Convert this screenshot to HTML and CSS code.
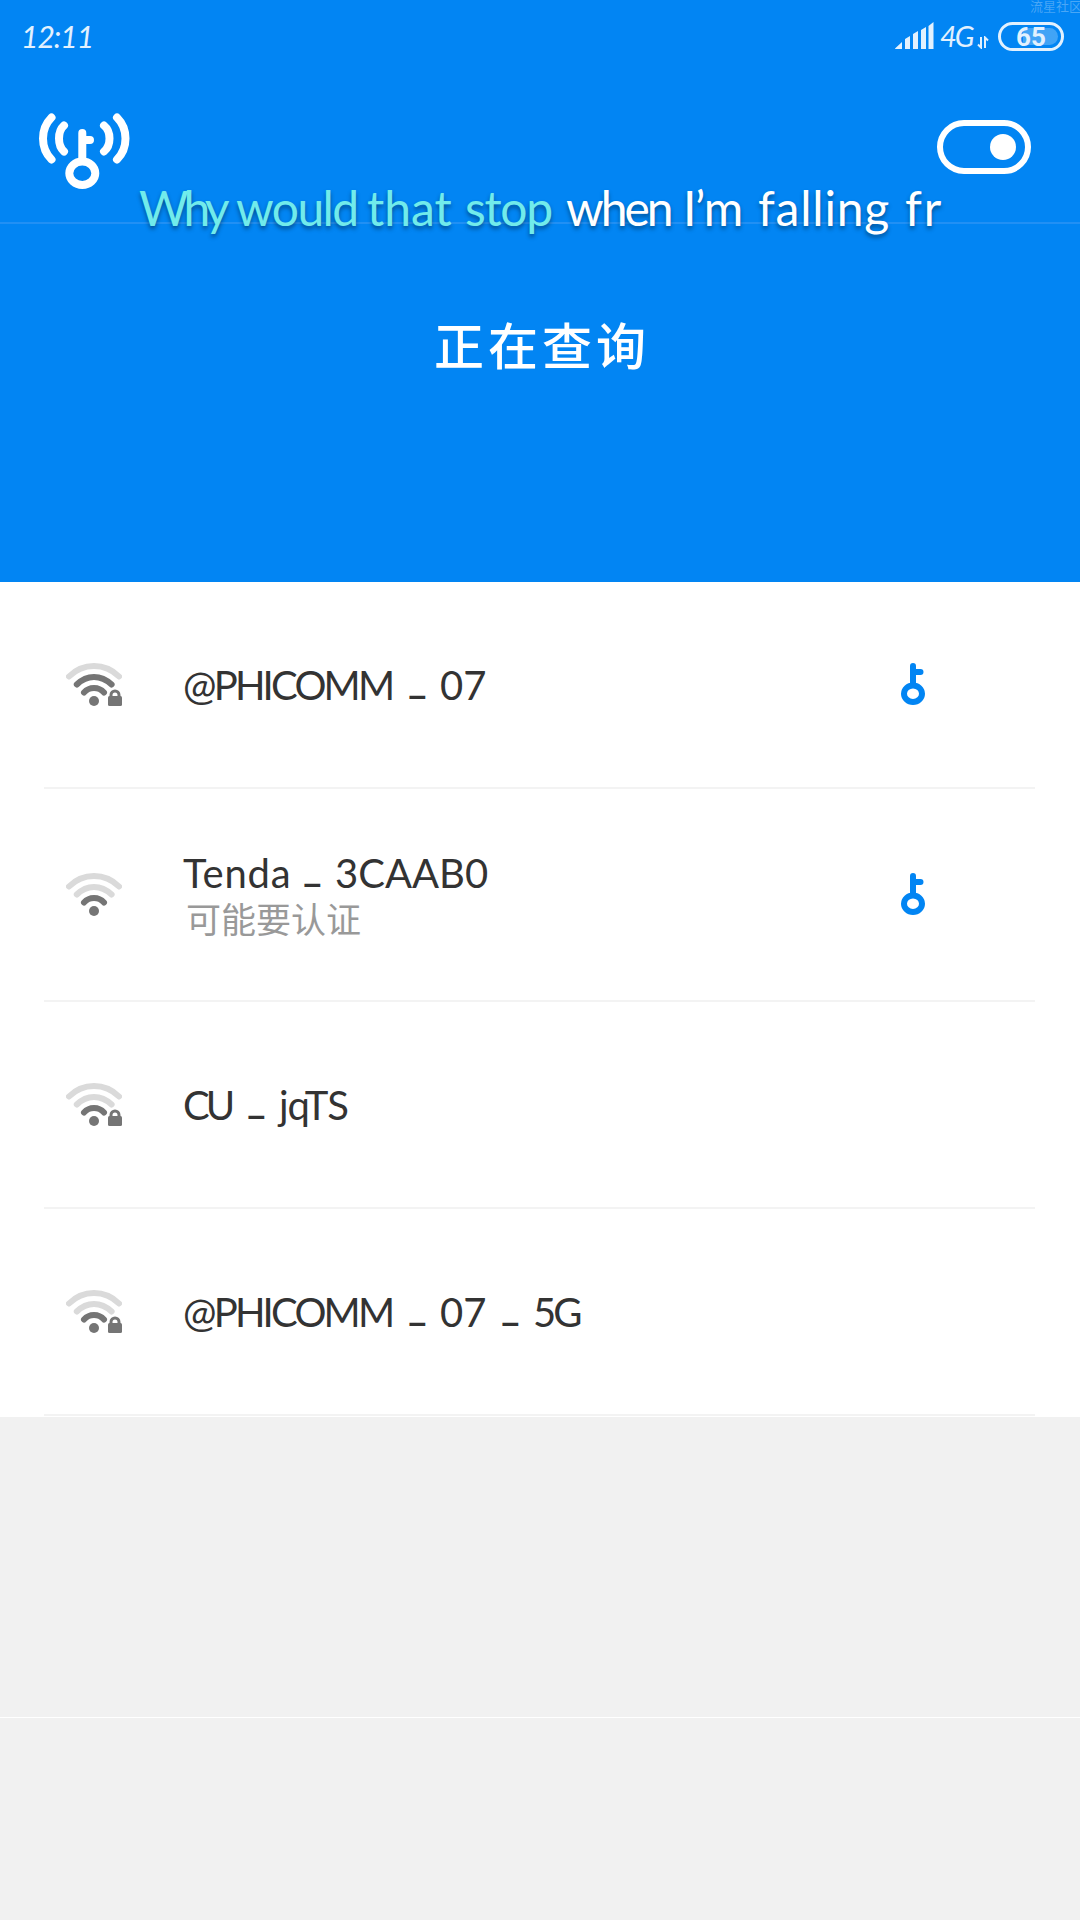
FILE: index.html
```html
<!DOCTYPE html>
<html lang="zh-CN">
<head>
<meta charset="utf-8">
<title>WiFi</title>
<link rel="stylesheet" href="styles.css">
</head>
<body>
<svg class="defs" aria-hidden="true">
  <symbol id="arc-outer" viewBox="0 0 56 43"><path d="M3 13.500Q13.500 3 28 3T53 13.500"/></symbol>
  <symbol id="arc-middle" viewBox="0 0 56 43"><path d="M10.800 21.500Q18.500 14 28 14T45.600 21.500"/></symbol>
  <symbol id="arc-inner" viewBox="0 0 56 43"><path d="M18 29.500Q22 25 28 25T38 29.500"/></symbol>
  <symbol id="dot" viewBox="0 0 56 43"><circle cx="28" cy="38" r="5"/></symbol>
  <symbol id="lock" viewBox="0 0 56 43"><path class="shackle" d="M45 35V32a4 4 0 0 1 8 0V35"/><rect x="42" y="33" width="14" height="10" rx="1.500"/></symbol>
  <symbol id="key" viewBox="0 0 24 42"><path d="M12 3V21M12 9H19.500"/><ellipse cx="12" cy="30.700" rx="9" ry="8.200"/></symbol>
</svg>

<header class="header">
  <div class="status">
    <span class="time">12:11</span>
    <div class="status-icons">
      <svg class="signal" viewBox="0 0 39 28"><path d="M0 26.500L7 20V27H1Q0 27 0 26.500M10 17L15 14V27H10ZM18 12L23 9V27H18ZM26 8L31 5V27H26ZM33.500 4L38.500 0V27H33.500Z"/></svg>
      <span class="network">4G</span>
      <svg class="data" viewBox="0 0 12 13"><path d="M4 1V11.500L1 8.500M8 12V1.500L11 4.500"/></svg>
      <div class="battery"><span>65</span></div>
    </div>
    <span class="community">流星社区</span>
  </div>
  <div class="toolbar">
    <svg class="logo" viewBox="0 0 91 76">
      <path d="M12.500 4.500Q4 13 4 25.500T12.500 46.500M25 12.500Q20 17 20 25.500T25 38.500M65 12.500Q70.500 17 70.500 25.500T65 38.500M78 4.500Q86.500 13 86.500 25.500T78 46.500M43.300 20V46M43.300 27H51"/>
      <ellipse cx="43.300" cy="60.300" rx="13" ry="11.700"/>
    </svg>
    <div class="toggle"></div>
  </div>
  <h1 class="state">正在查询</h1>
  <div class="lyrics"><span class="sung l-why">Why </span><span class="sung l-would">would </span><span class="sung l-that">that </span><span class="sung l-stop">stop </span><span class="l-when">when </span><span class="l-im">I’m </span><span class="l-falling">falling </span><span class="l-fr">fr</span></div>
</header>

<main class="list">
  <div class="row">
    <svg class="wifi" viewBox="0 0 56 43"><use class="off" href="#arc-outer"/><use href="#arc-middle"/><use href="#arc-inner"/><use href="#dot"/><use href="#lock"/></svg>
    <div class="info"><div class="name"><span class="w-phicomm">@PHICOMM</span><i>_</i><span class="w-num">07</span></div></div>
    <svg class="key" viewBox="0 0 24 42"><use href="#key"/></svg>
  </div>
  <div class="row tall">
    <svg class="wifi" viewBox="0 0 56 43"><use class="off" href="#arc-outer"/><use class="off" href="#arc-middle"/><use href="#arc-inner"/><use href="#dot"/></svg>
    <div class="info"><div class="name"><span class="w-tenda">Tenda</span><i>_</i><span class="w-code">3CAAB0</span></div><div class="note">可能要认证</div></div>
    <svg class="key" viewBox="0 0 24 42"><use href="#key"/></svg>
  </div>
  <div class="row">
    <svg class="wifi" viewBox="0 0 56 43"><use class="off" href="#arc-outer"/><use class="off" href="#arc-middle"/><use href="#arc-inner"/><use href="#dot"/><use href="#lock"/></svg>
    <div class="info"><div class="name"><span class="w-cu">CU</span><i>_</i><span class="w-jqts">jqTS</span></div></div>
  </div>
  <div class="row">
    <svg class="wifi" viewBox="0 0 56 43"><use class="off" href="#arc-outer"/><use class="off" href="#arc-middle"/><use href="#arc-inner"/><use href="#dot"/><use href="#lock"/></svg>
    <div class="info"><div class="name"><span class="w-phicomm">@PHICOMM</span><i>_</i><span class="w-num">07</span><i>_</i><span class="w-band">5G</span></div></div>
  </div>
</main>
<div class="footer-line"></div>
</body>
</html>
```
FILE: styles.css
```css
* { box-sizing: border-box; }
body {
  margin: 0;
  width: 1080px;
  height: 1920px;
  overflow: hidden;
  background: #f1f1f1;
  font-family: Lato, "Noto Sans CJK SC", sans-serif;
  color: #333;
}
svg { display: block; fill: none; flex: none; }
.defs { position: absolute; width: 0; height: 0; }

.header { position: relative; height: 582px; background: #0285f3; color: #fff; }
.status {
  height: 72px;
  padding: 0 16px 0 21px;
  display: flex;
  align-items: center;
  justify-content: space-between;
  color: #e2f1fe;
}
.time { font-size: 30px; font-style: italic; font-weight: 400; line-height: 70px; letter-spacing: -1px; }
.status-icons { display: flex; align-items: center; }
.signal { width: 39px; height: 28px; fill: currentColor; margin-right: 6px; }
.network { font-size: 29px; font-style: italic; font-weight: 400; line-height: 72px; width: 37px; letter-spacing: -2px; }
.data { width: 12px; height: 13px; stroke: currentColor; stroke-width: 2; margin: 12px 9px 0 0; }
.battery {
  width: 66px;
  height: 29px;
  border: 3px solid currentColor;
  border-radius: 15px;
  padding: 3px;
  display: flex;
}
.battery span {
  flex: 1;
  border-radius: 9px;
  background: linear-gradient(90deg, transparent 35%, rgba(255, 255, 255, .25) 35%);
  font: 700 26px/18px Roboto, sans-serif;
  text-align: center;
}
.community {
  position: absolute;
  top: -3px;
  right: -2px;
  font-size: 13px;
  line-height: 18px;
  color: rgba(255, 255, 255, .28);
}

.toolbar {
  height: 152px;
  padding: 41px 49px 0 39px;
  display: flex;
  justify-content: space-between;
  align-items: flex-start;
  border-bottom: 2px solid #2190f4;
}
.logo { width: 91px; height: 76px; stroke: #fff; stroke-width: 8; stroke-linecap: round; }
.toggle {
  width: 94px;
  height: 54px;
  margin-top: 6.500px;
  border: 6px solid #fff;
  border-radius: 27px;
  padding: 8px 9px;
  display: flex;
  justify-content: flex-end;
}
.toggle::after { content: ""; width: 26px; height: 26px; border-radius: 50%; background: #fff; }
.state {
  margin: 84px 0 0;
  font-size: 50px;
  font-weight: 500;
  line-height: 76px;
  letter-spacing: 4px;
  padding-left: 4px;
  text-align: center;
}
.lyrics {
  position: absolute;
  left: 139px;
  top: 178px;
  display: flex;
  font-size: 48px;
  line-height: 60px;
  white-space: pre;
  text-shadow: 0 3px 4px rgba(0, 0, 0, .4);
}
.sung { color: #71ebeb; }
.l-why { width: 97px; letter-spacing: -5px; }
.l-would { width: 131px; letter-spacing: -1.600px; }
.l-that { width: 98px; }
.l-stop { width: 101px; letter-spacing: -1.300px; }
.l-when { width: 117px; letter-spacing: -3px; }
.l-im { width: 75px; letter-spacing: -1.500px; }
.l-falling { width: 147px; letter-spacing: .8px; }
.l-fr { letter-spacing: 2px; }

.list { background: #fff; padding: 0 45px 1px 44px; }
.row {
  height: 207px;
  display: flex;
  align-items: center;
  padding: 0 110px 0 22px;
  border-bottom: 2px solid #f3f3f3;
}
.row.tall { height: 213px; }
.wifi { width: 56px; height: 43px; stroke: #757575; stroke-width: 6; stroke-linecap: round; }
.wifi .off { stroke: #dadada; }
#dot, #lock rect { fill: #757575; stroke: none; }
#lock .shackle { stroke-width: 3; stroke-linecap: butt; }
.info { flex: 1; margin-left: 61px; }
.name { display: flex; gap: 16px; font-size: 40px; line-height: 48px; white-space: nowrap; }
.name i { font-style: normal; font-weight: 700; width: 16px; transform: translateY(-7px); }
.w-phicomm { width: 209px; letter-spacing: -2.800px; }
.w-num { width: 45px; }
.w-tenda { width: 104px; letter-spacing: .8px; }
.w-cu { width: 48px; letter-spacing: -4px; }
.w-jqts { letter-spacing: -1px; }
.w-band { letter-spacing: -3px; }
.note { font-size: 35px; line-height: 44px; color: #999; padding-left: 3px; }
.key { width: 24px; height: 42px; margin-bottom: 1px; stroke: #0285f3; stroke-width: 6; stroke-linecap: round; }

.footer-line { margin-top: 300px; height: 1px; background: #fff; }
```
